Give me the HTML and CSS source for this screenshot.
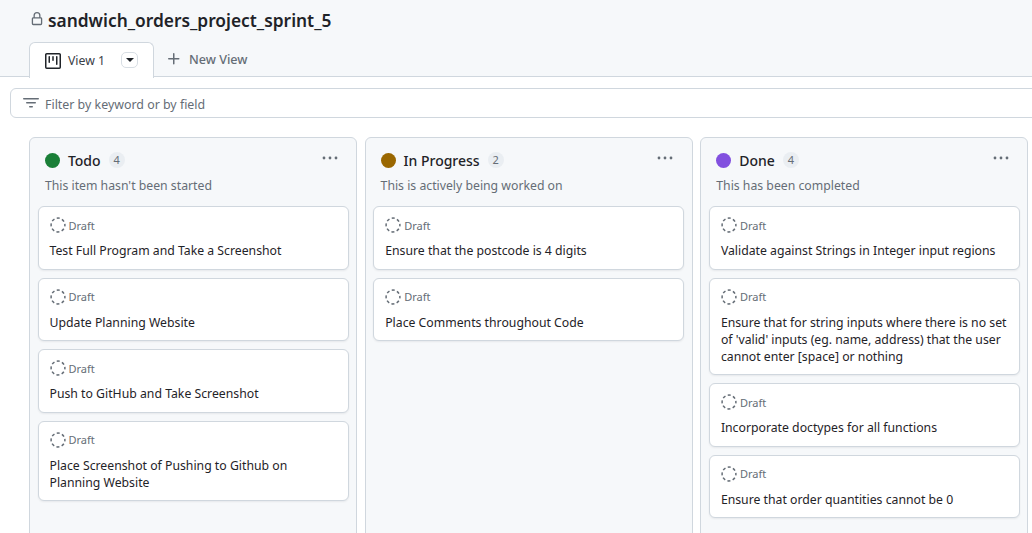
FILE: index.html
```html
<!DOCTYPE html>
<html lang="en">
<head>
  <meta charset="UTF-8">
  <title>sandwich_orders_project_sprint_5</title>
  <link rel="stylesheet" href="styles.css">
</head>
<body>

  <header class="top">
    <h1 class="title">
      <svg class="lock" width="14" height="14" viewBox="0 0 16 16"><path fill="#656d76" d="M4 4a4 4 0 0 1 8 0v2h.25c.966 0 1.75.784 1.75 1.75v5.5A1.75 1.75 0 0 1 12.25 15h-8.5A1.75 1.75 0 0 1 2 13.25v-5.5C2 6.784 2.784 6 3.75 6H4Zm6.5 2V4a2.5 2.5 0 1 0-5 0v2ZM3.5 7.75v5.5c0 .138.112.25.25.25h8.5a.25.25 0 0 0 .25-.25v-5.5a.25.25 0 0 0-.25-.25h-8.5a.25.25 0 0 0-.25.25Z"/></svg>
      sandwich_orders_project_sprint_5
    </h1>
    <nav class="tabs">
      <div class="tab">
        <svg width="16" height="16" viewBox="0 0 16 16"><path fill="#1f2328" d="M0 1.75C0 .784.784 0 1.75 0h12.5C15.216 0 16 .784 16 1.75v12.5A1.75 1.75 0 0 1 14.25 16H1.75A1.75 1.75 0 0 1 0 14.25ZM1.5 1.75v12.5c0 .138.112.25.25.25h12.5a.25.25 0 0 0 .25-.25V1.75a.25.25 0 0 0-.25-.25H1.75a.25.25 0 0 0-.25.25ZM11.75 3a.75.75 0 0 1 .75.75v7.5a.75.75 0 0 1-1.5 0v-7.5a.75.75 0 0 1 .75-.75Zm-8.25.75a.75.75 0 0 1 1.5 0v5.5a.75.75 0 0 1-1.5 0ZM8 3a.75.75 0 0 1 .75.75v3.5a.75.75 0 0 1-1.5 0v-3.5A.75.75 0 0 1 8 3Z"/></svg>
        <span class="tab-name">View 1</span>
        <span class="caret-btn"><span class="caret"></span></span>
      </div>
      <div class="new-view">
        <svg width="16" height="16" viewBox="0 0 16 16"><path fill="#656d76" d="M7.75 2a.75.75 0 0 1 .75.75V7h4.25a.75.75 0 0 1 0 1.5H8.5v4.25a.75.75 0 0 1-1.5 0V8.5H2.75a.75.75 0 0 1 0-1.5H7V2.75A.75.75 0 0 1 7.75 2Z"/></svg>
        New View
      </div>
    </nav>
  </header>

  <div class="filter">
    <svg width="16" height="16" viewBox="0 0 16 16"><path fill="#656d76" d="M.75 3h14.5a.75.75 0 0 1 0 1.5H.75a.75.75 0 0 1 0-1.5ZM3 7.75A.75.75 0 0 1 3.75 7h8.5a.75.75 0 0 1 0 1.5h-8.5A.75.75 0 0 1 3 7.75Zm3 4a.75.75 0 0 1 .75-.75h2.5a.75.75 0 0 1 0 1.5h-2.5a.75.75 0 0 1-.75-.75Z"/></svg>
    <span class="filter-text">Filter by keyword or by field</span>
  </div>

  <main class="board" id="board"></main>

  <script>
    const columnas = [
      { name: "Todo", color: "#1a7f37", note: "This item hasn't been started", cards: [
        "Test Full Program and Take a Screenshot",
        "Update Planning Website",
        "Push to GitHub and Take Screenshot",
        "Place Screenshot of Pushing to Github on Planning Website"
      ] },
      { name: "In Progress", color: "#9a6700", note: "This is actively being worked on", cards: [
        "Ensure that the postcode is 4 digits",
        "Place Comments throughout Code"
      ] },
      { name: "Done", color: "#8250df", note: "This has been completed", cards: [
        "Validate against Strings in Integer input regions",
        "Ensure that for string inputs where there is no set of 'valid' inputs (eg. name, address) that the user cannot enter [space] or nothing",
        "Incorporate doctypes for all functions",
        "Ensure that order quantities cannot be 0"
      ] }
    ];

    const draftIcon = `<svg width="16" height="16" viewBox="0 0 16 16"><circle cx="8" cy="8" r="6.9" fill="none" stroke="#656d76" stroke-width="1.5" stroke-dasharray="3 2.42" stroke-dashoffset="1.5"/></svg>`;

    document.getElementById("board").innerHTML = columnas.map(c => `
      <section class="column">
        <div class="col-head">
          <span class="dot" style="background: ${c.color}"></span>
          <span class="col-name">${c.name}</span>
          <span class="count">${c.cards.length}</span>
          <svg class="more" width="16" height="4" viewBox="0 0 16 4"><circle cx="2" cy="2" r="1.4" fill="#656d76"/><circle cx="8" cy="2" r="1.4" fill="#656d76"/><circle cx="14" cy="2" r="1.4" fill="#656d76"/></svg>
        </div>
        <p class="col-note">${c.note}</p>
        <div class="cards">
          ${c.cards.map(t => `
            <article class="card">
              <div class="card-meta">${draftIcon}<span>Draft</span></div>
              <div class="card-title">${t}</div>
            </article>
          `).join("")}
        </div>
      </section>
    `).join("");
  </script>

</body>
</html>
```

FILE: styles.css
```css
html, body {
  height: 100%;
  overflow: hidden;
}
body {
  margin: 0;
  background: #fff;
  color: #1f2328;
  font-family: "Noto Sans", "Open Sans", sans-serif;
  font-size: 12.25px;
}
.top {
  background: #f6f8fa;
  border-bottom: 1px solid #d0d7de;
  box-sizing: border-box;
  padding: 8px 0 0 29px;
  height: 77px;
}
.title {
  display: flex;
  align-items: center;
  gap: 4px;
  margin: 0;
  height: 24px;
  font-size: 17.35px;
  font-weight: 600;
  line-height: 24px;
}
.lock {
  margin-left: 1px;
  margin-top: -2px;
}
.tabs {
  display: flex;
  margin-top: 10px;
}
.tab {
  display: flex;
  align-items: center;
  gap: 7px;
  box-sizing: border-box;
  width: 125px;
  height: 36px;
  padding: 0 15px;
  background: #fff;
  border: 1px solid #d0d7de;
  border-bottom: none;
  border-radius: 6px 6px 0 0;
  color: #3a4047;
}
.tab-name {
  width: 46px;
}
.caret-btn {
  display: flex;
  align-items: center;
  justify-content: center;
  width: 15px;
  height: 14px;
  border: 1px solid #d8dee4;
  border-radius: 5px;
  margin-top: -1px;
}
.caret {
  border: 4px solid transparent;
  border-top-color: #1f2328;
  border-bottom: none;
}
.new-view {
  display: flex;
  align-items: center;
  gap: 7px;
  margin: 0 0 2px 12px;
  color: #656d76;
  font-size: 12.6px;
  font-weight: 500;
}
.filter {
  display: flex;
  align-items: center;
  gap: 6px;
  box-sizing: border-box;
  height: 30px;
  width: 1040px;
  margin: 11px 0 0 10px;
  padding-left: 12px;
  border: 1px solid #d0d7de;
  border-radius: 6px;
  color: #656d76;
}
.filter-text {
  font-size: 12.4px;
  padding-top: 2px;
}
.board {
  display: flex;
  gap: 7.7px;
  margin: 19px 0 0 29px;
}
.column {
  flex: 0 0 328px;
  box-sizing: border-box;
  height: 420px;
  padding: 0 7.5px;
  background: #f6f8fa;
  border: 1px solid #d0d7de;
  border-radius: 6px;
}
.col-head {
  display: flex;
  align-items: center;
  height: 20px;
  margin: 12px 0 0 7.4px;
}
.dot {
  width: 15px;
  height: 15px;
  border-radius: 50%;
  margin-right: 8px;
}
.col-name {
  font-size: 14px;
  font-weight: 500;
}
.count {
  margin-left: 8px;
  width: 16px;
  height: 16px;
  border-radius: 50%;
  background: #eaeef2;
  color: #656d76;
  font-size: 11px;
  line-height: 16px;
  text-align: center;
}
.more {
  margin-left: auto;
  margin-right: 11px;
  margin-top: -4px;
}
.col-note {
  margin: 6px 0 0 7.4px;
  color: #656d76;
  line-height: 20px;
}
.cards {
  display: flex;
  flex-direction: column;
  gap: 8px;
  margin-top: 10px;
}
.card {
  box-sizing: border-box;
  padding: 9.75px 11px 9.5px;
  background: #fff;
  border: 1px solid #d0d7de;
  border-radius: 6px;
  box-shadow: 0 1px 2px #1f232812;
}
.card-meta {
  display: flex;
  align-items: center;
  gap: 3px;
  height: 17px;
  font-size: 11px;
  color: #656d76;
}
.card-title {
  margin-top: 8.25px;
  line-height: 17px;
}
```
